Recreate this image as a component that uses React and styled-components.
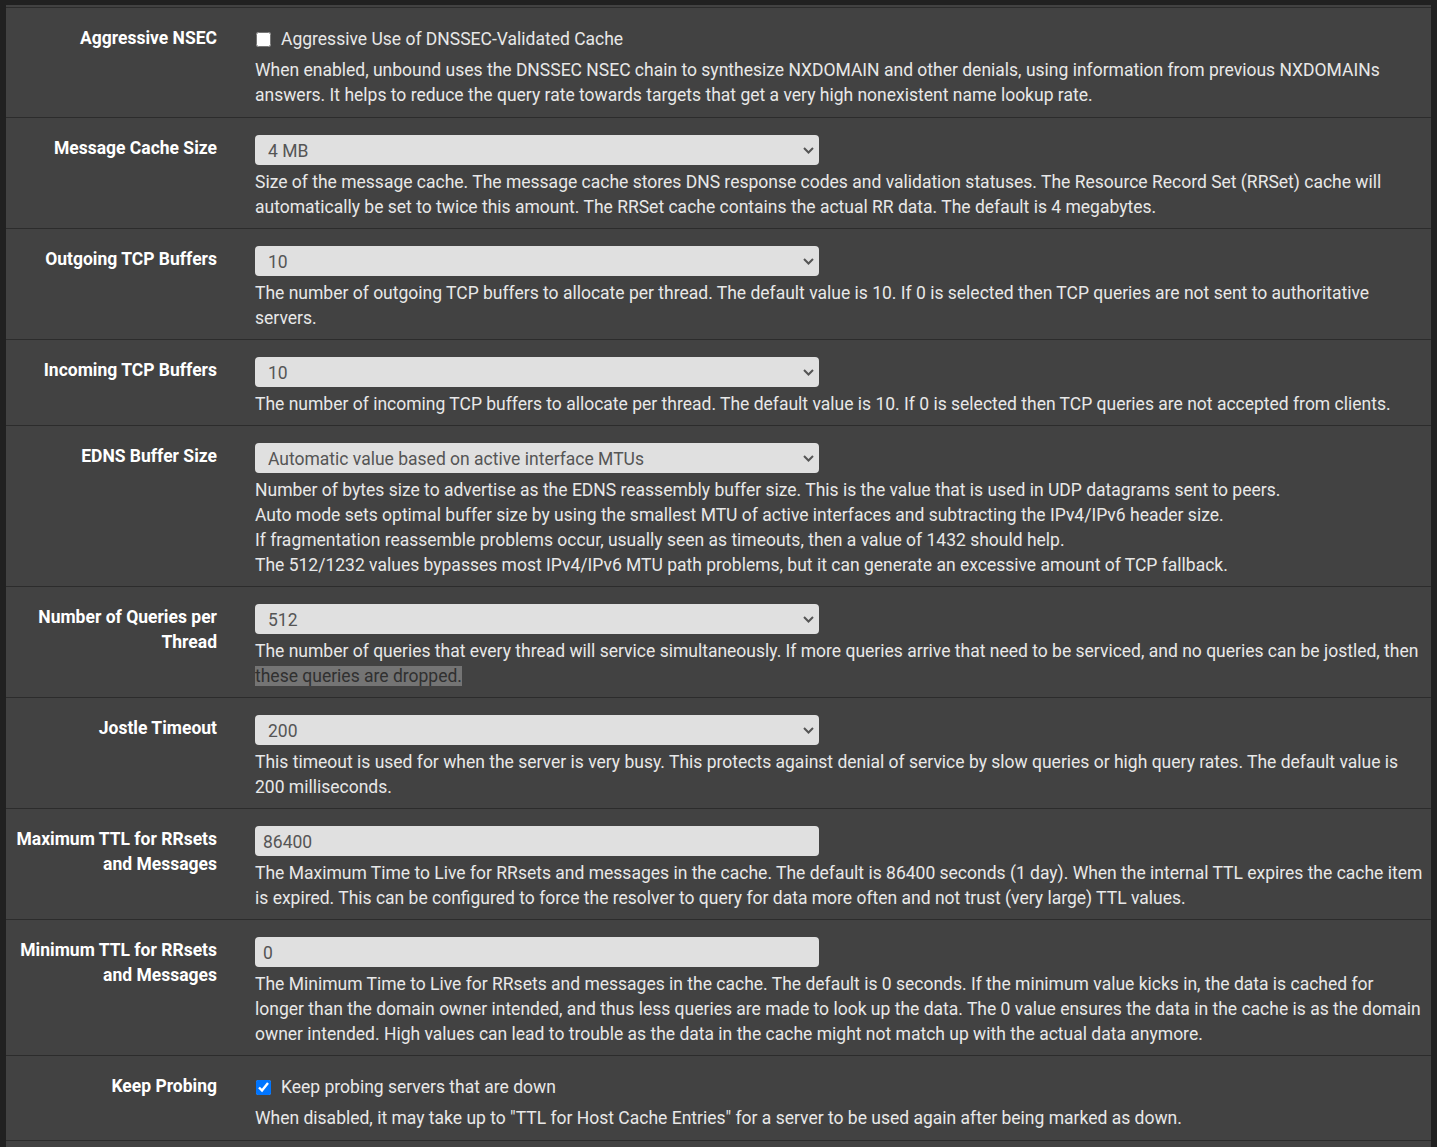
import React from "react";
import styled, { createGlobalStyle } from "styled-components";

const GlobalStyle = createGlobalStyle`
    html, body {
        margin: 0;
        padding: 0;
        background: #212121;
    }
    body {
        font-family: Roboto, "Liberation Sans", Arial, sans-serif;
        font-size: 17.5px;
        line-height: 25px;
        color: #e8e8e8;
    }
`;

const Page = styled.div`
    padding: 5px 6px 0 6px;
    min-height: 1147px;
    box-sizing: border-box;
`;

const Panel = styled.div`
    background: #424242;
    padding-top: 2px;
    padding-bottom: 7px;
`;

const Row = styled.div`
    display: grid;
    grid-template-columns: 211px 1fr;
    column-gap: 38px;
    border-top: 1px solid #2c2c2c;
    border-bottom: ${(p) => (p.$last ? "1px solid #2c2c2c" : "none")};
    padding: 17px 7px ${(p) => (p.$check ? "9px" : "8px")} 0;
`;

const Label = styled.div`
    text-align: right;
    font-weight: 700;
    color: #fff;
    padding-top: 1px;
`;

const Content = styled.div`
    display: flex;
    flex-direction: column;
    gap: 5px;
`;

const CheckLine = styled.label`
    display: flex;
    align-items: center;
    gap: 10px;
    height: 28px;
    padding-left: 1px;
    input {
        margin: 0;
        width: 15px;
        height: 15px;
        accent-color: #0075ff;
    }
`;

const SelectWrap = styled.div`
    position: relative;
    width: 564px;
    height: 30px;
    svg {
        position: absolute;
        right: 5px;
        top: 12px;
        pointer-events: none;
    }
`;

const Select = styled.select`
    appearance: none;
    width: 100%;
    height: 100%;
    border: none;
    border-radius: 4px;
    background: #e0e0e0;
    color: #555;
    font: inherit;
    line-height: 30px;
    padding: 1px 30px 0 13px;
    outline: none;
`;

const Input = styled.input`
    width: 564px;
    height: 30px;
    box-sizing: border-box;
    border: none;
    border-radius: 4px;
    background: #e0e0e0;
    color: #555;
    font: inherit;
    padding: 1px 8px 0 8px;
    outline: none;
`;

const Help = styled.div`
    color: #e8e8e8;
    mark {
        background: #747474;
        color: #303030;
    }
`;

function Chevron() {
    return (
        <svg width="11" height="7" viewBox="0 0 11 7">
            <path d="M1 1 L5.5 5.5 L10 1" fill="none" stroke="#555" strokeWidth="2" />
        </svg>
    );
}

function Dropdown({ value }) {
    return (
        <SelectWrap>
            <Select defaultValue={value}>
                <option>{value}</option>
            </Select>
            <Chevron />
        </SelectWrap>
    );
}

const rows = [
    {
        label: "Aggressive NSEC",
        check: { checked: false, text: "Aggressive Use of DNSSEC-Validated Cache" },
        help: ["When enabled, unbound uses the DNSSEC NSEC chain to synthesize NXDOMAIN and other denials, using information from previous NXDOMAINs answers. It helps to reduce the query rate towards targets that get a very high nonexistent name lookup rate."],
    },
    {
        label: "Message Cache Size",
        select: "4 MB",
        help: ["Size of the message cache. The message cache stores DNS response codes and validation statuses. The Resource Record Set (RRSet) cache will automatically be set to twice this amount. The RRSet cache contains the actual RR data. The default is 4 megabytes."],
    },
    {
        label: "Outgoing TCP Buffers",
        select: "10",
        help: ["The number of outgoing TCP buffers to allocate per thread. The default value is 10. If 0 is selected then TCP queries are not sent to authoritative servers."],
    },
    {
        label: "Incoming TCP Buffers",
        select: "10",
        help: ["The number of incoming TCP buffers to allocate per thread. The default value is 10. If 0 is selected then TCP queries are not accepted from clients."],
    },
    {
        label: "EDNS Buffer Size",
        select: "Automatic value based on active interface MTUs",
        help: [
            "Number of bytes size to advertise as the EDNS reassembly buffer size. This is the value that is used in UDP datagrams sent to peers.",
            "Auto mode sets optimal buffer size by using the smallest MTU of active interfaces and subtracting the IPv4/IPv6 header size.",
            "If fragmentation reassemble problems occur, usually seen as timeouts, then a value of 1432 should help.",
            "The 512/1232 values bypasses most IPv4/IPv6 MTU path problems, but it can generate an excessive amount of TCP fallback.",
        ],
    },
    {
        label: "Number of Queries per Thread",
        select: "512",
        help: [
            <>
                The number of queries that every thread will service simultaneously. If more queries arrive that need to be serviced, and no queries can be jostled, then <mark>these queries are dropped.</mark>
            </>,
        ],
    },
    {
        label: "Jostle Timeout",
        select: "200",
        help: ["This timeout is used for when the server is very busy. This protects against denial of service by slow queries or high query rates. The default value is 200 milliseconds."],
    },
    {
        label: "Maximum TTL for RRsets and Messages",
        input: "86400",
        help: ["The Maximum Time to Live for RRsets and messages in the cache. The default is 86400 seconds (1 day). When the internal TTL expires the cache item is expired. This can be configured to force the resolver to query for data more often and not trust (very large) TTL values."],
    },
    {
        label: "Minimum TTL for RRsets and Messages",
        input: "0",
        help: ["The Minimum Time to Live for RRsets and messages in the cache. The default is 0 seconds. If the minimum value kicks in, the data is cached for longer than the domain owner intended, and thus less queries are made to look up the data. The 0 value ensures the data in the cache is as the domain owner intended. High values can lead to trouble as the data in the cache might not match up with the actual data anymore."],
    },
    {
        label: "Keep Probing",
        check: { checked: true, text: "Keep probing servers that are down" },
        help: ['When disabled, it may take up to "TTL for Host Cache Entries" for a server to be used again after being marked as down.'],
    },
];

export default function App() {
    return (
        <Page>
            <GlobalStyle />
            <Panel>
                {rows.map((row, i) => (
                    <Row key={row.label} $last={i === rows.length - 1} $check={!!row.check}>
                        <Label>{row.label}</Label>
                        <Content>
                            {row.check && (
                                <CheckLine>
                                    <input type="checkbox" defaultChecked={row.check.checked} />
                                    <span>{row.check.text}</span>
                                </CheckLine>
                            )}
                            {row.select && <Dropdown value={row.select} />}
                            {row.input && <Input defaultValue={row.input} />}
                            <Help>
                                {row.help.map((line, j) => (
                                    <div key={j}>{line}</div>
                                ))}
                            </Help>
                        </Content>
                    </Row>
                ))}
            </Panel>
        </Page>
    );
}
